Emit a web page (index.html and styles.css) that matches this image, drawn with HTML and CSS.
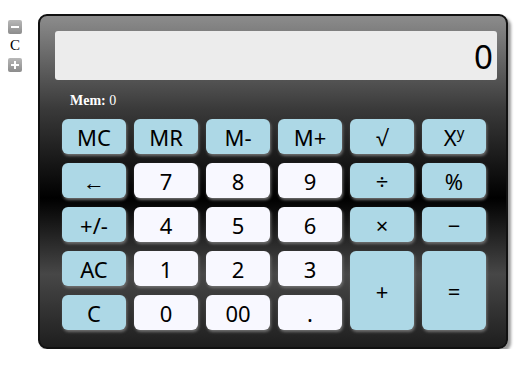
FILE: index.html
```html
<!DOCTYPE html>
<html lang="en">
<head>
    <meta charset="UTF-8">
    <title>Calculator</title>
    <link rel="stylesheet" href="styles.css">
</head>
<body>
    <div class="side">
        <span class="zoom-btn">
            <svg width="14" height="14" viewBox="0 0 14 14"><rect x="3" y="6" width="8" height="2" fill="#fff"/></svg>
        </span>
        <span class="side-label">C</span>
        <span class="zoom-btn">
            <svg width="14" height="14" viewBox="0 0 14 14"><rect x="3" y="6" width="8" height="2" fill="#fff"/><rect x="6" y="3" width="2" height="8" fill="#fff"/></svg>
        </span>
    </div>

    <div class="calc">
        <div class="screen">0</div>
        <div class="mem"><b>Mem:</b> 0</div>

        <div class="keys">
            <button class="key fn">MC</button>
            <button class="key fn">MR</button>
            <button class="key fn">M-</button>
            <button class="key fn">M+</button>
            <button class="key fn">√</button>
            <button class="key fn">X<sup>y</sup></button>

            <button class="key fn">←</button>
            <button class="key num">7</button>
            <button class="key num">8</button>
            <button class="key num">9</button>
            <button class="key fn">÷</button>
            <button class="key fn">%</button>

            <button class="key fn">+/-</button>
            <button class="key num">4</button>
            <button class="key num">5</button>
            <button class="key num">6</button>
            <button class="key fn">×</button>
            <button class="key fn">−</button>

            <button class="key fn">AC</button>
            <button class="key num">1</button>
            <button class="key num">2</button>
            <button class="key num">3</button>
            <button class="key fn tall">+</button>
            <button class="key fn tall">=</button>

            <button class="key fn">C</button>
            <button class="key num">0</button>
            <button class="key num">00</button>
            <button class="key num">.</button>
        </div>
    </div>
</body>
</html>
```

FILE: styles.css
```css
/* Page layout */
body {
    margin: 8px;
    display: flex;
    align-items: flex-start;
    background-color: #ffffff;
    font-family: "Noto Sans", "Open Sans", sans-serif;
}

/* Small zoom controls on the left */
.side {
    display: flex;
    flex-direction: column;
    align-items: center;
    width: 14px;
    margin-top: 12px;
}

.zoom-btn {
    display: block;
    width: 14px;
    height: 14px;
    border-radius: 2px;
    background: linear-gradient(#b8b8b8, #8c8c8c);
}

.zoom-btn svg {
    display: block;
}

.side-label {
    font-family: "Liberation Serif", serif;
    font-size: 15px;
    line-height: 18px;
    margin: 2px 0 4px;
    color: #000000;
}

/* Calculator body */
.calc {
    margin-left: 16px;
    margin-top: 6px;
    width: 451px;
    height: 316px;
    padding: 15px 0 0 15px;
    border: 2px solid #111111;
    border-radius: 9px;
    background: linear-gradient(#8c8c8c 0%, #3a3a3a 28%, #000000 55%, #474747 78%, #1e1e1e 100%);
    box-shadow: 3px 3px 3px #9a9a9a;
}

/* Display */
.screen {
    width: 438px;
    height: 49px;
    padding-right: 4px;
    border-radius: 3px;
    background-color: #ececec;
    color: #000000;
    font-size: 33px;
    line-height: 52px;
    text-align: right;
}

.mem {
    font-family: "Liberation Serif", serif;
    font-size: 14px;
    color: #ffffff;
    margin: 13px 0 0 15px;
    height: 16px;
    line-height: 16px;
}

/* Buttons */
.keys {
    display: grid;
    grid-template-columns: repeat(6, 64px);
    grid-auto-rows: 35px;
    column-gap: 8px;
    row-gap: 9px;
    margin: 10px 0 0 7px;
}

.key {
    border: none;
    border-radius: 6px;
    padding: 0;
    font-family: "Noto Sans", "Open Sans", sans-serif;
    font-size: 22px;
    color: #000000;
    cursor: pointer;
    box-shadow: 1px 2px 3px #707070;
}

.key sup {
    font-size: 15px;
    line-height: 0;
}

.fn {
    background-color: #add8e6;
}

.num {
    background-color: #f8f8ff;
}

.tall {
    grid-row: span 2;
}
```
